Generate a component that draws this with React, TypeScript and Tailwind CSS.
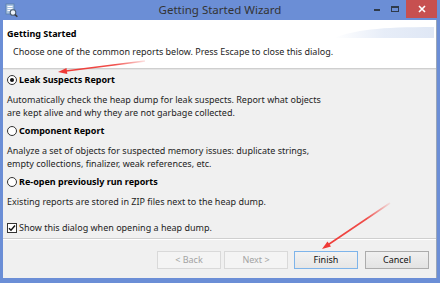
import React from "react";

function Radio({ checked }: { checked?: boolean }) {
  return (
    <span className="w-[10px] h-[10px] rounded-full border border-[#333] bg-white flex items-center justify-center shrink-0">
      {checked && <span className="w-[4px] h-[4px] rounded-full bg-[#111]" />}
    </span>
  );
}

function Checkbox() {
  return (
    <span className="w-[10px] h-[10px] border border-[#333] bg-white flex items-center justify-center shrink-0">
      <svg width="8" height="8" viewBox="0 0 8 8">
        <path d="M1 4.2 L3 6.2 L7 1.5" fill="none" stroke="#111" strokeWidth="1.4" />
      </svg>
    </span>
  );
}

function Btn({ label, kind, className }: { label: string; kind: "disabled" | "focus" | "normal"; className?: string }) {
  const cls =
    kind === "disabled"
      ? "border-[#d9d9d9] bg-[#f4f4f4] text-[#a3a3a3]"
      : kind === "focus"
      ? "border-[#7eb4ea] bg-gradient-to-b from-[#f2f2f2] to-[#e6e6e6] text-[#111]"
      : "border-[#acacac] bg-gradient-to-b from-[#f0f0f0] to-[#e3e3e3] text-[#111]";
  return (
    <div className={`w-[64px] h-[18px] border flex items-center justify-center text-[9px] ${cls} ${className ?? ""}`}>
      {label}
    </div>
  );
}

export default function App() {
  return (
    <div className="relative w-[440px] h-[283px] bg-[#6b8ed6] flex flex-col overflow-hidden font-['Noto_Sans',sans-serif]">
      {/* Title bar */}
      <div className="h-[20px] grid grid-cols-[1fr_auto_1fr] items-center shrink-0">
        <div className="flex items-center pl-[5px]">
          <svg width="13" height="15" viewBox="0 0 13 15">
            <rect x="1" y="1" width="8" height="10" fill="#a9c3e2" stroke="#5c7fa8" strokeWidth="0.8" />
            <rect x="2.5" y="3" width="5" height="1" fill="#ffffff" />
            <rect x="2.5" y="5" width="5" height="1" fill="#ffffff" />
            <rect x="2.5" y="7" width="3" height="1" fill="#ffffff" />
            <circle cx="8" cy="9.5" r="2.8" fill="#eef4fb" stroke="#4a5c70" strokeWidth="1.1" />
            <path d="M10 11.5 L12.3 13.8" stroke="#3a3a3a" strokeWidth="1.6" />
          </svg>
        </div>
        <div className="text-[11.5px] text-[#333] leading-none">Getting Started Wizard</div>
        <div className="flex justify-end items-start h-full">
          <div className="w-[12px] h-[18px] flex items-center justify-center mr-[6px]">
            <span className="w-[6px] h-[1.5px] bg-[#2f3a4a] mt-[2px]" />
          </div>
          <div className="w-[12px] h-[18px] flex items-center justify-center mr-[5px]">
            <span className="w-[8px] h-[6px] border border-[#2f3a4a] border-t-2" />
          </div>
          <div className="w-[31px] h-[18px] bg-[#c75050] flex items-center justify-center mr-[3px]">
            <svg width="8" height="8" viewBox="0 0 8 8">
              <path d="M1 1 L7 7 M7 1 L1 7" stroke="#ffffff" strokeWidth="1.6" />
            </svg>
          </div>
        </div>
      </div>

      {/* Client area */}
      <div className="flex-1 mx-[3px] mb-[5px] bg-[#f0f0f0] flex flex-col border-r border-[#9aa6b8]">
        {/* Header */}
        <div className="relative h-[48px] bg-white pl-[4px] pt-[7px] shrink-0">
          <svg className="absolute right-[2px] top-[4px]" width="100" height="14" viewBox="0 0 100 14">
            <defs>
              <linearGradient id="hg" x1="0" x2="1" y1="0" y2="0">
                <stop offset="0" stopColor="#e4ebf7" stopOpacity="0" />
                <stop offset="0.5" stopColor="#e4ebf7" stopOpacity="0.9" />
                <stop offset="1" stopColor="#dfe7f5" stopOpacity="1" />
              </linearGradient>
            </defs>
            <path d="M0 14 C 20 6, 45 3, 100 3 L100 14 Z" fill="url(#hg)" />
          </svg>
          <div className="relative h-[13px] leading-[13px] text-[9px] font-bold text-black">Getting Started</div>
          <div className="relative h-[13px] leading-[13px] text-[9px] text-[#1e1e1e] mt-[5px] pl-[6px]">
            Choose one of the common reports below. Press Escape to close this dialog.
          </div>
        </div>
        <div className="h-[1px] bg-[#cfcfcf] shrink-0" />
        <div className="h-[1px] bg-[#e4e4e4] shrink-0" />

        {/* Body */}
        <div className="h-[168px] pl-[4px] pt-[3px] text-[9px] text-[#1e1e1e] shrink-0">
          <div className="h-[14px] flex items-center gap-[2px]">
            <Radio checked />
            <span className="font-bold text-black">Leak Suspects Report</span>
          </div>
          <div className="mt-[6px] leading-[13px]">
            <div className="h-[13px]">Automatically check the heap dump for leak suspects. Report what objects</div>
            <div className="h-[13px]">are kept alive and why they are not garbage collected.</div>
          </div>
          <div className="mt-[5px] h-[14px] flex items-center gap-[2px]">
            <Radio />
            <span className="font-bold text-black">Component Report</span>
          </div>
          <div className="mt-[6px] leading-[13px]">
            <div className="h-[13px]">Analyze a set of objects for suspected memory issues: duplicate strings,</div>
            <div className="h-[13px]">empty collections, finalizer, weak references, etc.</div>
          </div>
          <div className="mt-[5px] h-[14px] flex items-center gap-[2px]">
            <Radio />
            <span className="font-bold text-black">Re-open previously run reports</span>
          </div>
          <div className="mt-[6px] leading-[13px]">
            <div className="h-[13px]">Existing reports are stored in ZIP files next to the heap dump.</div>
          </div>
          <div className="mt-[13px] h-[14px] flex items-center gap-[2px]">
            <Checkbox />
            <span>Show this dialog when opening a heap dump.</span>
          </div>
        </div>
        <div className="h-[1px] bg-[#cfcfcf] shrink-0" />
        <div className="h-[1px] bg-white shrink-0" />

        {/* Footer */}
        <div className="flex-1 flex justify-end items-start pt-[11px] pr-[7px]">
          <Btn label="< Back" kind="disabled" />
          <Btn label="Next >" kind="disabled" className="ml-[3px]" />
          <Btn label="Finish" kind="focus" className="ml-[6px]" />
          <Btn label="Cancel" kind="normal" className="ml-[7px]" />
        </div>
      </div>

      {/* Red annotation arrows */}
      <svg className="absolute left-0 top-0 pointer-events-none" width="440" height="283" viewBox="0 0 440 283">
        <defs>
          <linearGradient id="a1" gradientUnits="userSpaceOnUse" x1="145" y1="61" x2="58" y2="72">
            <stop offset="0" stopColor="#ef3a36" stopOpacity="0.15" />
            <stop offset="0.35" stopColor="#ef3a36" stopOpacity="0.9" />
            <stop offset="1" stopColor="#ef3a36" stopOpacity="1" />
          </linearGradient>
          <linearGradient id="a2" gradientUnits="userSpaceOnUse" x1="390" y1="203" x2="322" y2="249">
            <stop offset="0" stopColor="#ef3a36" stopOpacity="0.1" />
            <stop offset="0.35" stopColor="#ef3a36" stopOpacity="0.9" />
            <stop offset="1" stopColor="#ef3a36" stopOpacity="1" />
          </linearGradient>
        </defs>
        <path d="M145 61 L64 71.2" stroke="url(#a1)" strokeWidth="1.6" />
        <path d="M58 72 L66.5 68 L67.3 74 Z" fill="#ef3a36" />
        <path d="M390 203 L327 245.5" stroke="url(#a2)" strokeWidth="1.6" />
        <path d="M322 249 L327.5 241.5 L331 246.5 Z" fill="#ef3a36" />
      </svg>
    </div>
  );
}
